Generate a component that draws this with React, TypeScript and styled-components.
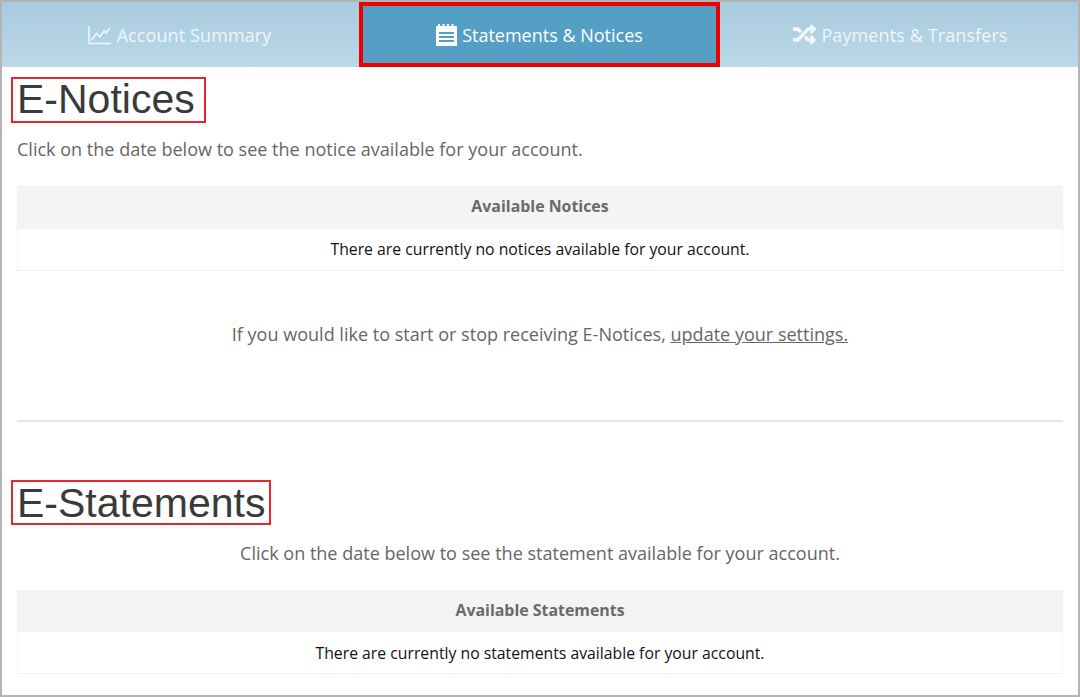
import React from 'react'
import styled, { createGlobalStyle } from 'styled-components'
import { FaRandom } from 'react-icons/fa'

const GlobalStyle = createGlobalStyle`
  html, body {
    margin: 0;
    padding: 0;
    background: #fff;
  }
  * {
    box-sizing: border-box;
  }
`

const Frame = styled.div`
  width: 1080px;
  height: 697px;
  border: 2px solid #b4b4b4;
  overflow: hidden;
  font-family: 'Open Sans', sans-serif;
  background: #fff;
`

const TabBar = styled.div`
  display: grid;
  grid-template-columns: 357px 361px 358px;
  height: 65px;
  background: linear-gradient(#a9cbdf, #bad8e7);
`

const Tab = styled.div<{ $active?: boolean }>`
  display: flex;
  align-items: center;
  justify-content: center;
  gap: ${(p) => (p.$active ? '5px' : '6px')};
  font-size: 18px;
  letter-spacing: ${(p) => (p.$active ? '0' : '0.1px')};
  color: ${(p) => (p.$active ? '#fff' : 'rgba(255, 255, 255, 0.82)')};
  background: ${(p) => (p.$active ? '#559ec4' : 'transparent')};
  border: ${(p) => (p.$active ? '4.5px solid #ec0000' : 'none')};
  svg {
    flex: none;
  }
`

const SummaryTab = styled(Tab)`
  padding-right: 2px;
`

const PaymentsTab = styled(Tab)`
  gap: 5px;
  padding-left: 3px;
`

const Content = styled.div`
  padding: 0 15px;
`

const Heading = styled.h1<{ $width: number }>`
  display: block;
  width: ${(p) => p.$width}px;
  margin: 10px 0 0 -6px;
  padding: 0 0 0 4px;
  height: 46px;
  border: 2px solid #e8262c;
  font-family: 'Liberation Sans', Arial, sans-serif;
  font-weight: 400;
  font-size: 41px;
  line-height: 41px;
  color: #3a3a3a;
  white-space: nowrap;
`

const Intro = styled.p`
  margin: 14px 0 25px;
  font-size: 18.05px;
  line-height: 24px;
  color: #666;
`

const Table = styled.div`
  border: 1px solid #f1f1f1;
  border-top: none;
`

const TableHead = styled.div`
  height: 43px;
  line-height: 41px;
  background: #f4f4f4;
  text-align: center;
  font-size: 15.9px;
  font-weight: 700;
  color: #6a6a6a;
`

const TableRow = styled.div`
  height: 41px;
  line-height: 40px;
  text-align: center;
  font-size: 15.77px;
  color: #111;
`

const SettingsText = styled.p`
  margin: 51px 0 0;
  font-size: 18.05px;
  line-height: 24px;
  text-align: center;
  color: #666;
  a {
    color: #666;
    text-decoration: underline;
  }
`

const Divider = styled.hr`
  margin: 74px 0 0;
  border: none;
  border-top: 2px solid #e6e6e6;
`

const SecondHeading = styled(Heading)`
  margin-top: 58px;
  height: 45px;
  line-height: 43px;
`

const SecondIntro = styled(Intro)`
  margin-top: 16px;
  text-align: center;
`

const SecondTableHead = styled(TableHead)`
  height: 42px;
`

const SecondTableRow = styled(TableRow)`
  line-height: 42px;
`

const ChartIcon = () => (
  <svg width="23" height="20" viewBox="0 0 23 20" fill="none" stroke="#fff" strokeOpacity="0.85">
    <path d="M1 1v17.5h22" strokeWidth="1.5" />
    <path d="M3.5 15l5-6.5 3.5 3.5 4-6 2 2 4-5" strokeWidth="1.5" />
  </svg>
)

const NotepadIcon = () => (
  <svg width="21" height="23" viewBox="0 0 21 23" fill="#fff">
    <path
      fillRule="evenodd"
      d="M0 3h2V1h2v2h2.5V1h2v2h2.5V1h2v2h2.5V1h2v2H21v20H0zM3 9v2h15V9zM3 13v2h15v-2zM3 17v2h15v-2z"
    />
  </svg>
)

const App: React.FC = () => (
  <>
    <GlobalStyle />
    <Frame>
      <TabBar>
        <SummaryTab>
          <ChartIcon />
          Account Summary
        </SummaryTab>
        <Tab $active>
          <NotepadIcon />
          Statements &amp; Notices
        </Tab>
        <PaymentsTab>
          <FaRandom size={23} />
          Payments &amp; Transfers
        </PaymentsTab>
      </TabBar>
      <Content>
        <Heading $width={195}>E-Notices</Heading>
        <Intro>Click on the date below to see the notice available for your account.</Intro>
        <Table>
          <TableHead>Available Notices</TableHead>
          <TableRow>There are currently no notices available for your account.</TableRow>
        </Table>
        <SettingsText>
          If you would like to start or stop receiving E-Notices, <a href="#settings">update your settings.</a>
        </SettingsText>
        <Divider />
        <SecondHeading $width={260}>E-Statements</SecondHeading>
        <SecondIntro>Click on the date below to see the statement available for your account.</SecondIntro>
        <Table>
          <SecondTableHead>Available Statements</SecondTableHead>
          <SecondTableRow>There are currently no statements available for your account.</SecondTableRow>
        </Table>
      </Content>
    </Frame>
  </>
)

export default App
